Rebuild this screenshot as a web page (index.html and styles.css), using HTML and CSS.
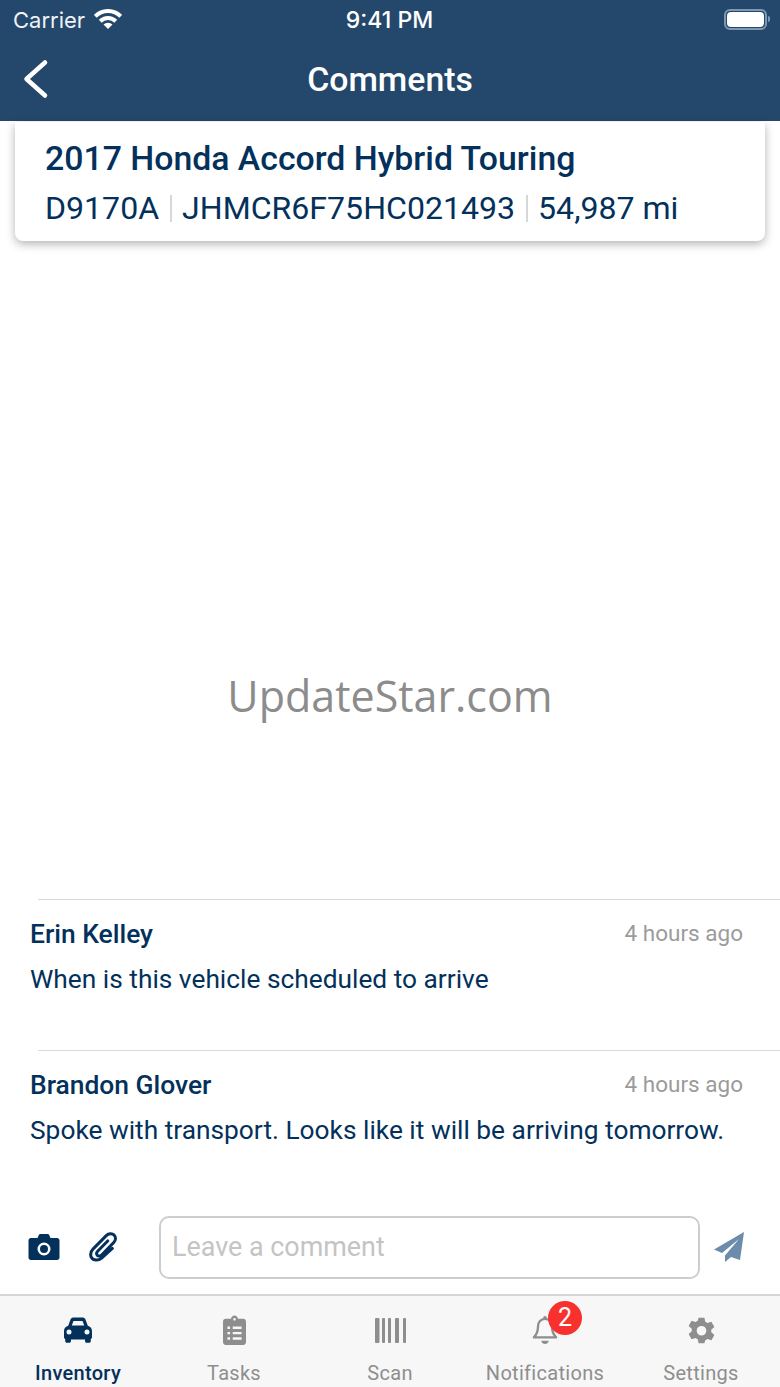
FILE: index.html
```html
<!DOCTYPE html>
<html lang="en">
<head>
<meta charset="UTF-8">
<meta name="viewport" content="width=device-width, initial-scale=1.0">
<title>Comments</title>
<link rel="stylesheet" href="styles.css">
</head>
<body>
<div class="app">
  <!-- Header -->
  <div class="header">
    <div class="status-bar">
      <div class="status-left">
        <span>Carrier</span>
        <svg class="wifi" viewBox="0 0 28 20" width="28" height="20">
          <path d="M1.270 7.270A18 18 0 0 1 26.730 7.270" fill="none" stroke="#fff" stroke-width="4"/>
          <path d="M6.220 12.220A11 11 0 0 1 21.780 12.220" fill="none" stroke="#fff" stroke-width="4"/>
          <path d="M14 20 9.500 15.500A6.400 6.400 0 0 1 18.500 15.500Z" fill="#fff"/>
        </svg>
      </div>
      <div class="status-time">9:41 PM</div>
      <div class="status-right">
        <div class="battery"><div class="battery-fill"></div></div>
        <div class="battery-cap"></div>
      </div>
    </div>
    <div class="nav-bar">
      <svg class="back" viewBox="0 0 26 40" width="26" height="40">
        <path d="M22 3.500 L3.500 20 L22 36.500" fill="none" stroke="#fff" stroke-width="4.500" stroke-linecap="round" stroke-linejoin="round"/>
      </svg>
      <div class="nav-title">Comments</div>
    </div>
  </div>

  <!-- Vehicle card -->
  <div class="card">
    <div class="card-title">2017 Honda Accord Hybrid Touring</div>
    <div class="card-info">
      <span>D9170A</span><span class="sep"></span><span>JHMCR6F75HC021493</span><span class="sep"></span><span>54,987 mi</span>
    </div>
  </div>

  <div class="main">
    <div class="watermark">UpdateStar.com</div>
  </div>

  <!-- Comments -->
  <div class="comment">
    <div class="comment-top">
      <span class="comment-name">Erin Kelley</span>
      <span class="comment-time">4 hours ago</span>
    </div>
    <div class="comment-text">When is this vehicle scheduled to arrive</div>
  </div>
  <div class="comment">
    <div class="comment-top">
      <span class="comment-name">Brandon Glover</span>
      <span class="comment-time">4 hours ago</span>
    </div>
    <div class="comment-text">Spoke with transport. Looks like it will be arriving tomorrow.</div>
  </div>

  <!-- Input row -->
  <div class="input-row">
    <svg class="camera" viewBox="0 0 32 28" width="32" height="28">
      <path fill-rule="evenodd" fill="#03315b" d="M3 5h6.500l1.300-3c.3-.6.800-1 1.500-1h7.400c.7 0 1.200.4 1.500 1l1.300 3H29c1.400 0 2.500 1.100 2.500 2.500v17c0 1.400-1.100 2.500-2.500 2.500H3c-1.400 0-2.500-1.100-2.500-2.500v-17C.5 6.100 1.600 5 3 5zM16 9.500a6.500 6.500 0 1 0 0 13 6.500 6.500 0 0 0 0-13zM16 12a4 4 0 1 1 0 8 4 4 0 0 1 0-8z"/>
    </svg>
    <svg class="clip" viewBox="0 0 30 32" width="28" height="30">
      <path fill="none" stroke="#03315b" stroke-width="3.200" stroke-linecap="round" stroke-linejoin="round" d="M25 17.500 L13.500 27.800 C10 31 4.500 30.500 2.800 27.500 C1 24.500 1.800 21 4.500 18 L18.500 3.800 C21 1.300 25 1.300 27 3.300 C29 5.500 28.800 8.800 26.500 11.200 L13.500 24.500 C12 26 9.800 26 8.800 24.800 C7.800 23.500 8 21.800 9.500 20.300 L20 9.500"/>
    </svg>
    <div class="input-box">Leave a comment</div>
    <svg class="send" viewBox="0 0 32 32" width="32" height="32">
      <path fill="#6c8cab" d="M31 1 L27 29 L18 26 L12 31 L12 24.500 L26 8 L9 22 L1 18.500 Z"/>
    </svg>
  </div>

  <!-- Tab bar -->
  <div class="tab-bar">
    <div class="tab active">
      <div class="tab-icon">
        <svg viewBox="0 0 30 26" width="30" height="26">
          <path fill="#03315b" fill-rule="evenodd" d="M7.500 2.500C8.100 1 9.300.5 11 .5h8c1.700 0 2.900.5 3.500 2l2.300 6.300c2.200.7 4.200 2.500 4.200 5.200v6c0 .9-.5 1.700-1.200 2.100V24c0 1-.8 1.800-1.800 1.800h-2.200c-1 0-1.800-.8-1.800-1.800v-1.500H8V24c0 1-.8 1.800-1.800 1.800H4c-1 0-1.800-.8-1.800-1.800v-1.900C1.500 21.700 1 20.900 1 20v-6c0-2.700 2-4.500 4.200-5.200L7.500 2.500zM10.500 4 8.800 8.500h12.400L19.500 4h-9zM6 12.500a2.500 2.500 0 1 0 0 5 2.500 2.500 0 0 0 0-5zm18 0a2.500 2.500 0 1 0 0 5 2.500 2.500 0 0 0 0-5z"/>
        </svg>
      </div>
      <span>Inventory</span>
    </div>
    <div class="tab">
      <div class="tab-icon">
        <svg viewBox="0 0 26 31" width="23" height="30" preserveAspectRatio="none">
          <path fill="#8e8e8e" fill-rule="evenodd" d="M3 4h6c.4-2 2-3.500 4-3.500s3.600 1.500 4 3.500h6c1.700 0 3 1.300 3 3v21c0 1.700-1.300 3-3 3H3c-1.700 0-3-1.300-3-3V7c0-1.700 1.300-3 3-3zM13 3a1.500 1.500 0 1 0 0 3 1.500 1.500 0 0 0 0-3zM5 12v2.500h3V12H5zm6 0v2.500h10V12H11zM5 17.500V20h3v-2.500H5zm6 0V20h10v-2.500H11zM5 23v2.500h3V23H5zm6 0v2.500h10V23H11z"/>
        </svg>
      </div>
      <span>Tasks</span>
    </div>
    <div class="tab">
      <div class="tab-icon">
        <svg viewBox="0 0 31 25" width="31" height="25">
          <g fill="#8e8e8e">
            <rect x="0" y="0" width="4.500" height="25" rx="1"/>
            <rect x="7" y="0" width="3" height="25" rx="1"/>
            <rect x="13" y="0" width="3" height="25" rx="1"/>
            <rect x="20" y="0" width="4" height="25" rx="1"/>
            <rect x="28" y="0" width="3" height="25" rx="1"/>
          </g>
        </svg>
      </div>
      <span>Scan</span>
    </div>
    <div class="tab tab-right">
      <div class="tab-icon">
        <div class="bell-wrap">
          <svg viewBox="0 0 28 32" width="26" height="30">
            <path fill="none" stroke="#8e8e8e" stroke-width="2.500" stroke-linejoin="round" d="M14 4c-4.500 0-7.500 3.500-7.500 8 0 6-1.500 9-4.500 12h24c-3-3-4.500-6-4.500-12 0-4.500-3-8-7.500-8z"/>
            <circle cx="14" cy="3" r="2" fill="#8e8e8e"/>
            <path fill="#8e8e8e" d="M10 27.500h8c0 2-1.800 3.500-4 3.500s-4-1.500-4-3.500z"/>
          </svg>
          <div class="badge">2</div>
        </div>
      </div>
      <span>Notifications</span>
    </div>
    <div class="tab tab-right">
      <div class="tab-icon">
        <svg viewBox="0 0 30 32" width="29" height="31">
          <path fill="#8e8e8e" fill-rule="evenodd" d="M12 1h6l.9 4.200 2.300 1.300 4.100-1.300 3 5.300-3.200 2.900v2.600l3.200 2.900-3 5.300-4.100-1.300-2.300 1.300L18 27.400h-6l-.9-4.200-2.300-1.300-4.100 1.300-3-5.300 3.200-2.900v-2.600L1.700 9.500l3-5.300 4.100 1.300 2.300-1.300L12 1zM15 9.500a5 5 0 1 0 0 10 5 5 0 0 0 0-10z" transform="translate(0 1.800)"/>
        </svg>
      </div>
      <span>Settings</span>
    </div>
  </div>
</div>
</body>
</html>
```

FILE: styles.css
```css
/* Page */
body {
  margin: 0;
  padding: 0;
  background-color: #fff;
  font-family: Roboto, "Liberation Sans", sans-serif;
}

.app {
  display: flex;
  flex-direction: column;
  width: 780px;
  height: 1387px;
  overflow: hidden;
}

/* Header */
.header {
  height: 121px;
  background-color: #24486b;
  color: #fff;
  flex-shrink: 0;
}

.status-bar {
  display: grid;
  grid-template-columns: 1fr auto 1fr;
  align-items: center;
  height: 40px;
  padding: 0 10px 0 13px;
  font-family: Inter, Roboto, sans-serif;
}

.status-left {
  display: flex;
  align-items: center;
  gap: 9px;
  font-size: 22px;
  color: #eef2f6;
}

.wifi {
  margin-top: -3px;
}

.status-time {
  margin-right: 4px;
  font-size: 23px;
  font-weight: 500;
}

.status-right {
  display: flex;
  align-items: center;
  justify-content: flex-end;
  gap: 1px;
  margin-top: -2px;
}

.battery {
  width: 37px;
  height: 15px;
  padding: 1px;
  border: 2px solid #7f97b0;
  border-radius: 6px;
}

.battery-fill {
  width: 100%;
  height: 100%;
  background-color: #fff;
  border-radius: 4px;
}

.battery-cap {
  width: 2px;
  height: 6px;
  background-color: #7f97b0;
  border-radius: 0 2px 2px 0;
}

.nav-bar {
  position: relative;
  display: flex;
  align-items: center;
  justify-content: center;
  height: 78px;
}

.back {
  position: absolute;
  left: 23px;
  top: 19px;
}

.nav-title {
  font-size: 33.800px;
  font-weight: 500;
  margin-top: 1px;
}

/* Vehicle card */
.card {
  flex-shrink: 0;
  height: 119px;
  margin: 1px 15px 0;
  padding: 15px 30px 0 30px;
  box-sizing: border-box;
  background-color: #fff;
  border-radius: 0 0 8px 8px;
  box-shadow: 0 3px 10px rgba(0, 0, 0, 0.3);
  color: #03315b;
}

.card-title {
  font-size: 33.800px;
  font-weight: 500;
  line-height: 44px;
}

.card-info {
  display: flex;
  align-items: center;
  margin-top: 5px;
  font-size: 32.100px;
  line-height: 44px;
}

.sep {
  width: 2px;
  height: 27px;
  margin: 0 10.500px;
  background-color: #d5d8db;
}

/* Watermark */
.main {
  flex: 1;
  min-height: 0;
  display: flex;
  justify-content: center;
  padding-top: 425px;
}

.watermark {
  font-family: "Open Sans", sans-serif;
  font-size: 43px;
  line-height: 60px;
  color: #8c8c8c;
}

/* Comments */
.comment {
  position: relative;
  height: 151px;
  flex-shrink: 0;
  padding: 20px 37px 0 30px;
  box-sizing: border-box;
  color: #03315b;
}

.comment::before {
  content: "";
  position: absolute;
  top: 0;
  left: 38px;
  right: 0;
  height: 1px;
  background-color: #d9d9d9;
}

.comment-top {
  display: flex;
  justify-content: space-between;
  align-items: flex-start;
  line-height: 30px;
}

.comment-name {
  font-size: 26.400px;
  font-weight: 500;
}

.comment-time {
  font-size: 22.500px;
  line-height: 28px;
  color: #9b9b9b;
}

.comment-text {
  margin-top: 15px;
  font-size: 26.300px;
  line-height: 30px;
}

/* Input row */
.input-row {
  display: flex;
  align-items: center;
  flex-shrink: 0;
  height: 94px;
  margin-top: -1px;
  padding-left: 28px;
}

.camera {
  margin-right: 29px;
  flex-shrink: 0;
}

.clip {
  flex-shrink: 0;
  margin-right: 42px;
}

.input-box {
  width: 541px;
  height: 63px;
  box-sizing: border-box;
  border: 2px solid #cdcdcd;
  border-radius: 10px;
  padding-left: 11px;
  font-size: 26.900px;
  line-height: 59px;
  color: #c4c4c4;
  flex-shrink: 0;
  margin-right: 13px;
}

.send {
  flex-shrink: 0;
}

/* Tab bar */
.tab-bar {
  display: grid;
  grid-template-columns: repeat(5, 1fr);
  flex-shrink: 0;
  height: 93px;
  box-sizing: border-box;
  background-color: #f7f7f7;
  border-top: 2px solid #d6d6d6;
}

.tab {
  box-sizing: border-box;
  display: flex;
  flex-direction: column;
  align-items: center;
  padding-top: 18px;
  gap: 15px;
  font-size: 20px;
  letter-spacing: 0.300px;
  color: #8e8e8e;
}

.tab-right {
  padding-right: 2px;
}

.tab-icon {
  display: flex;
  align-items: center;
  justify-content: center;
  height: 32px;
}

.tab span {
  line-height: 24px;
}

.tab.active {
  color: #03315b;
  font-weight: 500;
}

.bell-wrap {
  position: relative;
  height: 30px;
}

.badge {
  position: absolute;
  top: -14px;
  left: 16px;
  width: 34px;
  height: 34px;
  border-radius: 50%;
  background-color: #f8312f;
  color: #fff;
  font-size: 25px;
  line-height: 34px;
  text-align: center;
  letter-spacing: 0;
}
```
